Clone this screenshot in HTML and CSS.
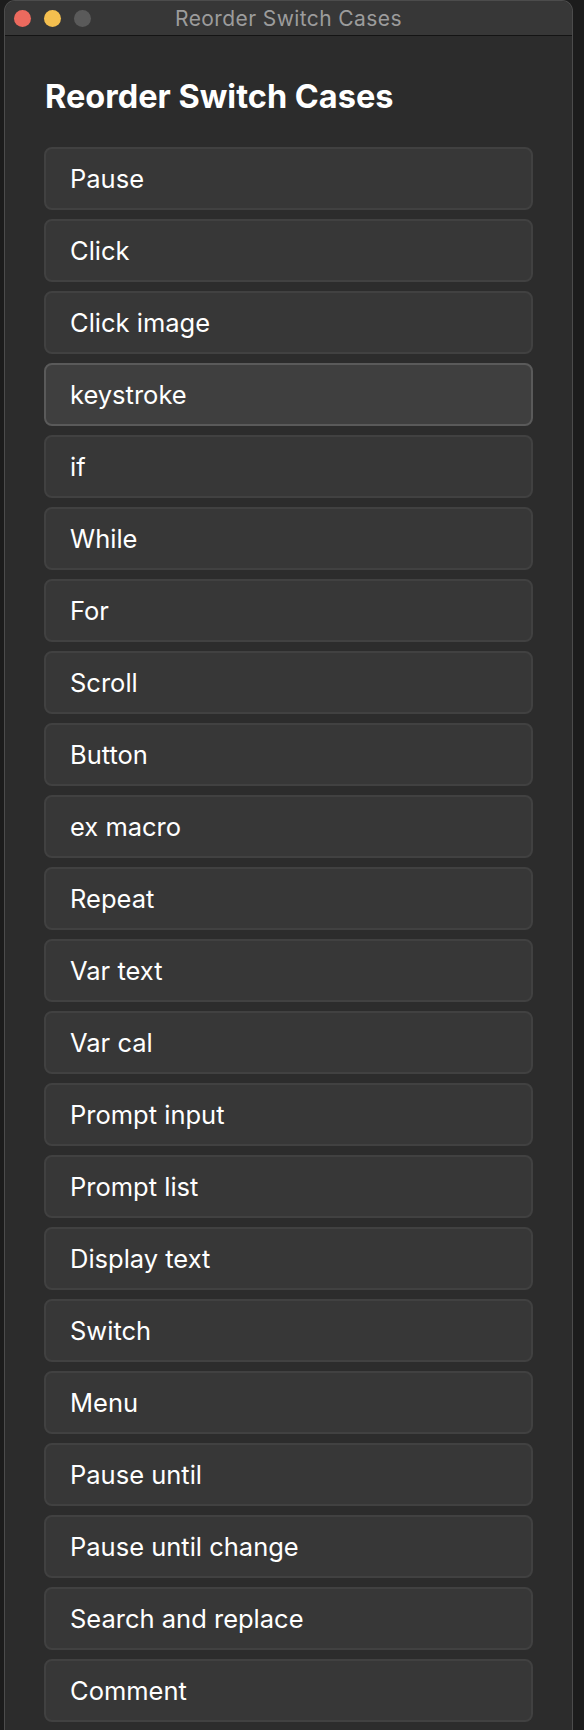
FILE: index.html
```html
<!DOCTYPE html>
<html>
<head>
<meta charset="utf-8">
<link rel="stylesheet" href="styles.css">
</head>
<body>
<div class="window">
  <div class="titlebar">
    <div class="lights">
      <span class="light red"></span>
      <span class="light yellow"></span>
      <span class="light gray"></span>
    </div>
    <div class="title">Reorder Switch Cases</div>
  </div>
  <div class="content">
    <h1 class="heading">Reorder Switch Cases</h1>
    <ul class="cases">
      <li class="case">Pause</li>
      <li class="case">Click</li>
      <li class="case">Click image</li>
      <li class="case active">keystroke</li>
      <li class="case">if</li>
      <li class="case">While</li>
      <li class="case">For</li>
      <li class="case">Scroll</li>
      <li class="case">Button</li>
      <li class="case">ex macro</li>
      <li class="case">Repeat</li>
      <li class="case">Var text</li>
      <li class="case">Var cal</li>
      <li class="case">Prompt input</li>
      <li class="case">Prompt list</li>
      <li class="case">Display text</li>
      <li class="case">Switch</li>
      <li class="case">Menu</li>
      <li class="case">Pause until</li>
      <li class="case">Pause until change</li>
      <li class="case">Search and replace</li>
      <li class="case">Comment</li>
    </ul>
  </div>
</div>
</body>
</html>
```

FILE: styles.css
```css
html, body {
  margin: 0;
  padding: 0;
}
body {
  background: #1c1c1c;
  width: 584px;
  height: 1730px;
  overflow: hidden;
  font-family: Inter, "Noto Sans", "Liberation Sans", sans-serif;
}
.window {
  margin-left: 4px;
  width: 567px;
  height: 1760px;
  background: #2c2c2c;
  border-left: 1px solid #4c4c4c;
  border-right: 1px solid #4c4c4c;
  border-top: 1px solid #4c4c4c;
  border-radius: 11px 11px 0 0;
  overflow: hidden;
}
.titlebar {
  height: 34px;
  background: #373737;
  border-bottom: 1px solid #141414;
  display: flex;
  align-items: center;
  position: relative;
}
.lights {
  display: flex;
  gap: 13px;
  padding-left: 9px;
}
.light {
  width: 17px;
  height: 17px;
  border-radius: 50%;
  display: block;
}
.red { background: #ec6a5e; }
.yellow { background: #f4bf4f; }
.gray { background: #5a5a5a; }
.title {
  position: absolute;
  left: 0;
  right: 0;
  top: 0;
  bottom: 0;
  display: flex;
  align-items: center;
  justify-content: center;
  color: #9c9c9c;
  font-size: 21px;
  letter-spacing: 0.4px;
  pointer-events: none;
}
.content {
  padding: 41px 39px 0 39px;
}
.heading {
  margin: 0 0 30px 0;
  font-size: 32.5px;
  line-height: 40px;
  font-weight: 700;
  color: #ffffff;
  padding-left: 1px;
}
.cases {
  list-style: none;
  margin: 0;
  padding: 0;
  display: flex;
  flex-direction: column;
  gap: 9px;
}
.case {
  box-sizing: border-box;
  height: 63px;
  background: #373737;
  border: 2px solid #414141;
  border-radius: 8px;
  display: flex;
  align-items: center;
  padding-left: 24px;
  color: #ffffff;
  font-size: 25.5px;
}
.case.active {
  background: #3f3f3f;
  border-color: #5a5a5a;
}
```
